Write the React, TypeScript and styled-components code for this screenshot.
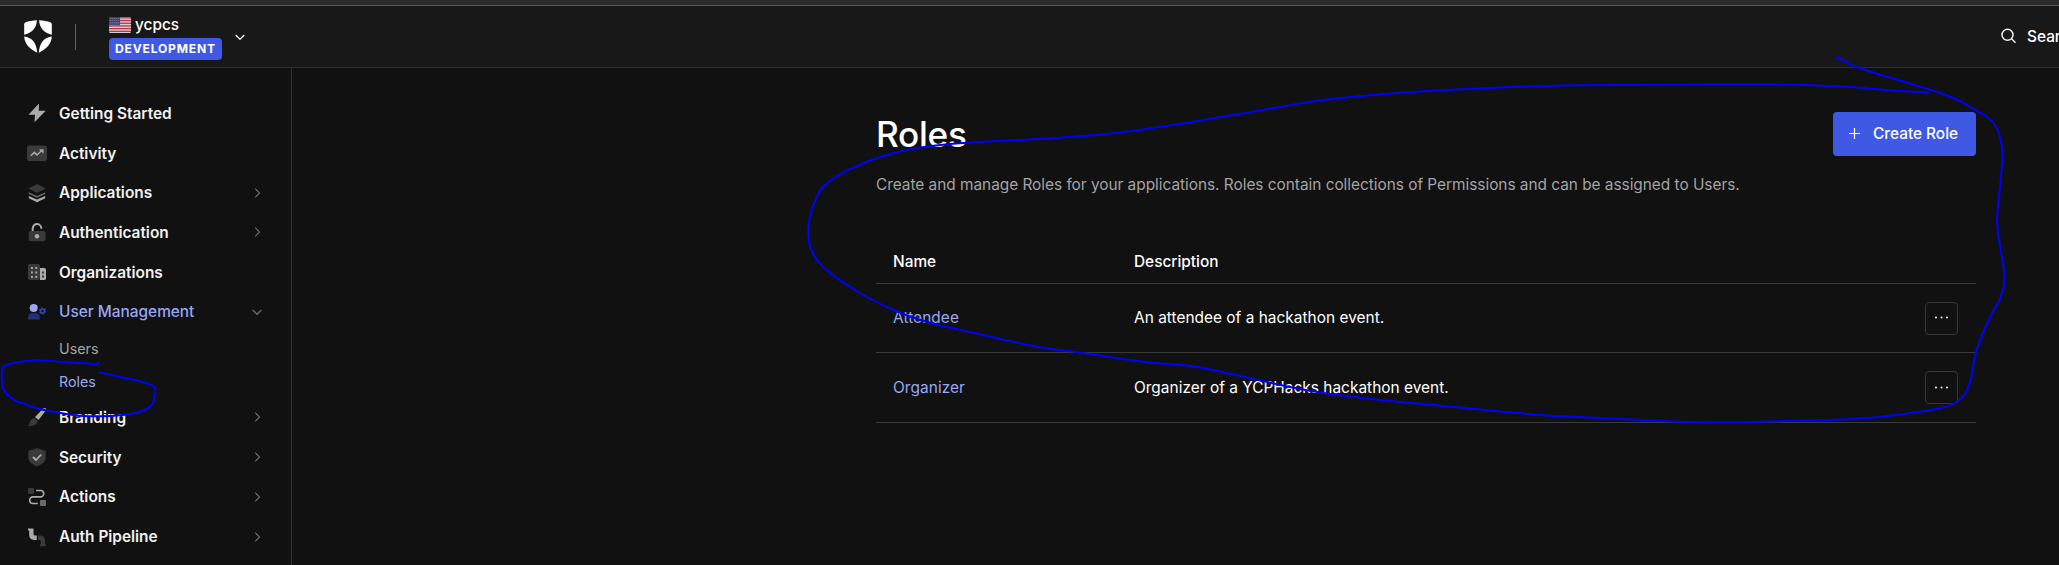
import React from 'react';
import styled, { createGlobalStyle } from 'styled-components';

const Global = createGlobalStyle`
  *, *::before, *::after { box-sizing: border-box; }
  html, body { margin: 0; padding: 0; background: #111111; overflow: hidden; }
  body { font-family: Inter, "Liberation Sans", sans-serif; color: #fff; }
`;

const Page = styled.div`
  position: relative;
  display: flex;
  flex-direction: column;
  width: 100%;
  height: 565px;
  overflow: hidden;
  background: #111111;
`;

const WindowEdge = styled.div`
  flex: none;
  height: 6px;
  background: #2c2c2c;
  border-bottom: 1px solid #575757;
`;

const Header = styled.header`
  flex: none;
  display: flex;
  align-items: center;
  height: 62px;
  padding-left: 24px;
  background: #181818;
  border-bottom: 1px solid #303030;
`;

const LogoLink = styled.a`
  display: flex;
  width: 28px;
`;

const Divider = styled.span`
  width: 1px;
  height: 26px;
  margin: 0 33px 0 23px;
  background: #666;
`;

const Tenant = styled.div`
  display: flex;
  flex-direction: column;
  align-items: flex-start;
  gap: 4px;
  padding-top: 2px;
`;

const TenantName = styled.div`
  display: flex;
  align-items: center;
  gap: 4px;
  height: 18px;
  font-size: 15.4px;
  font-weight: 500;
`;

const EnvBadge = styled.span`
  display: flex;
  align-items: center;
  height: 22px;
  padding: 0 6px;
  border-radius: 4px;
  background: #3f59e4;
  font-size: 12.1px;
  font-weight: 700;
  letter-spacing: 0.8px;
`;

const TenantToggle = styled.span`
  display: flex;
  margin-left: 12px;
`;

const Search = styled.div`
  display: flex;
  align-items: center;
  gap: 11px;
  width: 58px;
  margin-left: auto;
  padding-bottom: 1px;
  overflow: hidden;
  white-space: nowrap;
  font-size: 15.4px;
  font-weight: 500;
  svg { flex: none; }
`;

const Body = styled.div`
  flex: 1;
  display: flex;
  min-height: 0;
`;

const Sidebar = styled.nav`
  flex: none;
  width: 292px;
  padding: 25.5px 28px 0 27px;
  border-right: 1px solid #303030;
`;

const NavItem = styled.a<{ $active?: boolean }>`
  display: flex;
  align-items: center;
  height: 39.7px;
  color: ${(p) => (p.$active ? '#99a7f1' : '#f2f2f2')};
  font-size: 15.4px;
  font-weight: ${(p) => (p.$active ? 500 : 600)};
`;

const NavIcon = styled.span`
  display: flex;
  width: 20px;
  margin-right: 12px;
`;

const NavLabel = styled.span`
  flex: 1;
`;

const SubList = styled.div`
  padding: 0 0 0 32px;
  height: 66px;
`;

const SubItem = styled.a<{ $active?: boolean }>`
  display: flex;
  align-items: center;
  height: 33px;
  color: ${(p) => (p.$active ? '#99a7f1' : '#a3a3a3')};
  font-size: 14.3px;
`;

const Main = styled.main`
  width: 1100px;
  margin-left: 584px;
  padding-top: 44px;
`;

const TitleRow = styled.div`
  display: flex;
  justify-content: space-between;
  height: 44px;
`;

const Title = styled.h1`
  margin: 0;
  font-size: 35.2px;
  line-height: 45px;
  font-weight: 500;
  letter-spacing: -0.3px;
`;

const CreateButton = styled.button`
  display: flex;
  align-items: center;
  width: 143px;
  height: 44px;
  padding: 0 0 2px 16px;
  gap: 13px;
  border: 0;
  border-radius: 4px;
  background: #3f59e4;
  color: #fff;
  font-family: inherit;
  font-size: 15.4px;
  font-weight: 500;
  white-space: nowrap;
`;

const Intro = styled.p`
  margin: 16px 0 0;
  height: 26px;
  line-height: 26px;
  font-size: 15.4px;
  letter-spacing: -0.02px;
  color: #a3a3a3;
  white-space: nowrap;
`;

const Table = styled.div`
  margin-top: 41px;
`;

const Row = styled.div<{ $head?: boolean; $height: number }>`
  display: grid;
  grid-template-columns: 241px 1fr 33px;
  align-items: center;
  height: ${(p) => p.$height}px;
  padding: 0 18px 0 17px;
  border-bottom: 1px solid #3a3a3a;
  font-size: 15.4px;
  font-weight: ${(p) => (p.$head ? 500 : 400)};
`;

const Cell = styled.span`
  padding-bottom: 1px;
  letter-spacing: 0.03px;
`;

const RoleLink = styled.a`
  padding-bottom: 1px;
  color: #99a7f1;
  letter-spacing: 0.08px;
`;

const MoreButton = styled.button`
  display: flex;
  align-items: center;
  justify-content: center;
  width: 33px;
  height: 33px;
  padding: 0 0 1px;
  border: 1px solid #363636;
  border-radius: 4px;
  background: transparent;
`;

const InkLayer = styled.svg`
  position: absolute;
  left: 0;
  top: 0;
  pointer-events: none;
`;

const Shield = () => (
  <svg width="28" height="33" viewBox="0 0 28 34" preserveAspectRatio="none" fill="#fff">
    <path d="M13 .3C8.500 .4 4.500 1.300 1.600 2.400Q.3 3 .2 4.500V15.100C7 14 12.300 9 13 .3Z" />
    <path d="M15 .3C19.500 .4 23.500 1.300 26.400 2.400Q27.700 3 27.800 4.500V15.100C21 14 15.700 9 15 .3Z" />
    <path d="M.2 17C7.500 17.800 12.600 23 13.200 33.800C6 30 .5 25 .2 17Z" />
    <path d="M27.800 17C20.500 17.800 15.400 23 14.800 33.800C22 30 27.500 25 27.800 17Z" />
  </svg>
);

const Flag = () => (
  <svg width="22" height="16" viewBox="0 0 22 16">
    <rect width="22" height="16" rx="1.500" fill="#d9cfd2" />
    {[0, 1, 2, 3, 4, 5].map((i) => (
      <rect key={i} y={0.2 + i * 2.7} width="22" height="1.300" fill="#b5364b" />
    ))}
    <rect width="11" height="8.200" fill="#3c3f72" />
    {[1.5, 3.5, 5.5, 7].map((y, r) =>
      [1.5, 3.5, 5.5, 7.5, 9.5].map((x) => (
        <rect key={`${x}-${y}`} x={x - (r % 2 ? 0.8 : 0)} y={y - 0.4} width="0.800" height="0.800" fill="#a9aac9" />
      )),
    )}
  </svg>
);

const Chevron = ({ dir, color }: { dir: 'right' | 'down'; color: string }) => (
  <svg width="12" height="12" viewBox="0 0 12 12" fill="none" stroke={color} strokeWidth={dir === 'down' ? 1.4 : 1.2}>
    {dir === 'right' ? <path d="M4.200 1.700L8.500 6L4.200 10.300" /> : <path d="M1.700 4L6 8.200L10.300 4" />}
  </svg>
);

const L = '#ababab';
const M = '#6a6a6a';
const D = '#3a3a3a';

const icons: Record<string, React.ReactNode> = {
  bolt: <path d="M11.500 1L1.500 11.800H8L7.500 19.300L18.700 7.800H11.800L12 1.200Z" fill={L} />,
  activity: (
    <>
      <rect x="0" y="2.500" width="20" height="15.500" rx="2" fill={D} />
      <path d="M3.800 12.800L7.400 9.400L10 12L15 7.300" fill="none" stroke={L} strokeWidth="1.500" />
      <path d="M12 6.200H16.500V10.700Z" fill={L} />
    </>
  ),
  layers: (
    <>
      <path d="M1.800 14L10 17L18.200 14V15.200L10 19.300L1.800 15.200Z M1.800 13L10 16.500L18.200 13V15L10 19L1.800 15Z" fill={L} />
      <path d="M1.500 9.200L10 13L18.500 9.200L18 11L10 14.800L2 11Z" fill={M} />
      <path d="M10 1L18.500 5.500L10 10L1.500 5.500Z" fill={D} />
    </>
  ),
  lock: (
    <>
      <rect x="1.700" y="9" width="16.800" height="10.200" rx="2" fill={D} />
      <path d="M5.700 9V6.300A4.300 4.500 0 0 1 14.300 6.800" fill="none" stroke={L} strokeWidth="2" />
      <circle cx="10" cy="14.200" r="2.200" fill={L} />
    </>
  ),
  building: (
    <>
      <rect x="1" y="2" width="12" height="16" rx="2" fill={D} />
      {[5, 9.5, 14].map((y) => [4, 8.3].map((x) => <rect key={`${x}-${y}`} x={x} y={y} width="1.900" height="1.900" fill={L} />))}
      <path d="M13 6H17.200A1.800 1.800 0 0 1 19 7.800V16.200A1.800 1.800 0 0 1 17.200 18H13Z" fill={L} />
      <rect x="15" y="9.500" width="2" height="2" fill={D} />
      <rect x="15" y="13.500" width="2" height="2" fill={D} />
    </>
  ),
  users: (
    <>
      <circle cx="6.700" cy="6" r="4" fill="#99a7f1" />
      <path d="M1 17.500V15.500A4.500 4.500 0 0 1 5.500 11.200H8.300A4.500 4.500 0 0 1 12.800 15.500V17.500Z" fill="#23307c" />
      <circle cx="15.500" cy="9" r="2" fill="none" stroke="#3048b8" strokeWidth="1.500" />
      <circle cx="15.500" cy="9" r="3" fill="none" stroke="#3048b8" strokeWidth="1.200" strokeDasharray="1.700 1.442" />
    </>
  ),
  brush: (
    <>
      <path d="M18.800 1V3.500L11.500 13L8 10L16.500 1.300Z" fill={L} />
      <path d="M7.300 11L10.600 14C10.500 17.500 7 19.300 1 18.800C3.500 17 2 12 7.300 11Z" fill={D} />
    </>
  ),
  shield: (
    <>
      <path d="M10 1L18.700 4V10.500C18.700 14.500 15 17.500 10 19.300C5 17.500 1.300 14.500 1.300 10.500V4Z" fill={D} />
      <path d="M6 10L9 13L14.200 7.500" fill="none" stroke={L} strokeWidth="1.800" />
    </>
  ),
  actions: (
    <>
      <rect x="1" y="1" width="6" height="6" rx="1" fill={D} />
      <rect x="13" y="13" width="6" height="6" rx="1" fill={M} />
      <path d="M9 3.500H13.500A3.200 3.200 0 0 1 13.500 9.900H6A3.200 3.200 0 0 0 6 16.500H10.800" fill="none" stroke={L} strokeWidth="1.600" />
    </>
  ),
  pipeline: (
    <>
      <path d="M1 1.500H6.500V7Q6.500 8.500 8 8.500H9.800V13H7Q2.300 12.500 2.200 8V3.500H1Z" fill={L} />
      <path d="M11 8.500H13.500Q18 9 18 13.500V17.500H19V19.300H13V17.500H13.800V14.500Q13.800 13 12.500 13H11Z" fill={D} />
    </>
  ),
};

type Entry = { icon: string; label: string; chevron?: 'right' | 'down'; active?: boolean; children?: string[] };

const entries: Entry[] = [
  { icon: 'bolt', label: 'Getting Started' },
  { icon: 'activity', label: 'Activity' },
  { icon: 'layers', label: 'Applications', chevron: 'right' },
  { icon: 'lock', label: 'Authentication', chevron: 'right' },
  { icon: 'building', label: 'Organizations' },
  { icon: 'users', label: 'User Management', chevron: 'down', active: true, children: ['Users', 'Roles'] },
  { icon: 'brush', label: 'Branding', chevron: 'right' },
  { icon: 'shield', label: 'Security', chevron: 'right' },
  { icon: 'actions', label: 'Actions', chevron: 'right' },
  { icon: 'pipeline', label: 'Auth Pipeline', chevron: 'right' },
];

const roles = [
  { name: 'Attendee', description: 'An attendee of a hackathon event.', height: 69 },
  { name: 'Organizer', description: 'Organizer of a YCPHacks hackathon event.', height: 70 },
];

type Point = [number, number];

// Freehand pen strokes, as the points the pen passed through.
const navStroke: Point[] = [
  [99, 362.5], [96, 364], [89, 363.5], [60, 361.7], [36, 360.3], [20, 362], [5, 365.500], [2.3, 369], [2, 379], [3.500, 389],
  [9, 396], [18, 402], [24, 403.5], [29, 406], [37, 408.3], [47, 410.7], [62, 413.3], [80, 415.7], [100, 416.3], [120, 415.3],
  [135, 413], [145, 410], [150, 406.5], [153.5, 402], [155, 394], [154.500, 387], [150, 384.5], [138, 380.8], [118, 376.500], [100, 372.5],
];

const mainStroke: Point[] = [
  [1836, 57.3], [1845, 61], [1853, 66], [1913, 84.5], [1943, 94], [1960, 101], [1970, 107], [1987, 117], [1995, 125],
  [2000, 137], [2002.5, 153], [2001, 177], [1998, 207], [1997, 220], [1999, 240], [2002, 257], [2004, 270], [2004, 285],
  [1999, 301], [1993, 311], [1983, 333], [1976, 352], [1973, 367], [1971, 379], [1965, 394], [1955, 403], [1940, 408.3],
  [1907, 413.5], [1867, 418], [1827, 420], [1750, 422], [1720, 422.2], [1667, 421.3], [1590, 417.5], [1540, 415],
  [1440, 405.7], [1380, 400], [1320, 392.5], [1290, 387], [1247, 377.5], [1210, 369.5], [1187, 365.5], [1143, 361.7],
  [1083, 353], [1043, 347.7], [1007, 340.5], [977, 333.5], [933, 323.5], [897, 311.5], [860, 293], [823, 267], [811, 249],
  [808.3, 233], [809.3, 220], [813, 206], [818, 195], [822, 188], [837, 176], [857, 166], [877, 158], [900, 151.5],
  [927, 146.5], [967, 142.7], [1033, 139.3], [1083, 136], [1127, 131.5], [1183, 123.5], [1233, 115], [1280, 107],
  [1317, 100.8], [1380, 94.3], [1423, 91.3], [1467, 89], [1513, 87], [1563, 85.5], [1613, 85], [1777, 84.5], [1817, 85.5],
  [1860, 87.7], [1900, 91], [1928, 92.5],
];

const toPath = (pts: Point[]) => {
  let d = `M${pts[0][0]} ${pts[0][1]}`;
  for (let i = 0; i < pts.length - 1; i++) {
    const a = pts[i];
    const b = pts[i + 1];
    const before = pts[i - 1] ?? a;
    const after = pts[i + 2] ?? b;
    // Tangents are scaled to the segment so that unevenly spaced points do not overshoot.
    const len = Math.hypot(b[0] - a[0], b[1] - a[1]) / 3;
    const ta = Math.hypot(b[0] - before[0], b[1] - before[1]) || 1;
    const tb = Math.hypot(after[0] - a[0], after[1] - a[1]) || 1;
    const c1 = [a[0] + ((b[0] - before[0]) / ta) * len, a[1] + ((b[1] - before[1]) / ta) * len];
    const c2 = [b[0] - ((after[0] - a[0]) / tb) * len, b[1] - ((after[1] - a[1]) / tb) * len];
    d += `C${c1[0].toFixed(2)} ${c1[1].toFixed(2)} ${c2[0].toFixed(2)} ${c2[1].toFixed(2)} ${b[0]} ${b[1]}`;
  }
  return d;
};

const Ink = () => (
  <InkLayer width="2059" height="565" viewBox="0 0 2059 565" fill="none" stroke="#0000ff" strokeWidth="2" strokeLinecap="round" strokeLinejoin="round">
    <path d={toPath(navStroke)} />
    <path d={toPath(mainStroke)} />
  </InkLayer>
);

export default function App() {
  return (
    <Page>
      <Global />
      <WindowEdge />
      <Header>
        <LogoLink><Shield /></LogoLink>
        <Divider />
        <Tenant>
          <TenantName><Flag />ycpcs</TenantName>
          <EnvBadge>DEVELOPMENT</EnvBadge>
        </Tenant>
        <TenantToggle><Chevron dir="down" color="#eee" /></TenantToggle>
        <Search>
          <svg width="15" height="16" viewBox="0 0 15 16" fill="none" stroke="#eee" strokeWidth="1.500">
            <circle cx="6.500" cy="6.800" r="5.500" />
            <path d="M10.500 10.800L14.500 14.800" />
          </svg>
          Search
        </Search>
      </Header>
      <Body>
        <Sidebar>
          {entries.map((e) => (
            <React.Fragment key={e.label}>
              <NavItem $active={e.active}>
                <NavIcon><svg width="20" height="20" viewBox="0 0 20 20">{icons[e.icon]}</svg></NavIcon>
                <NavLabel>{e.label}</NavLabel>
                {e.chevron && <Chevron dir={e.chevron} color="#6c6c6c" />}
              </NavItem>
              {e.children && (
                <SubList>
                  {e.children.map((c) => <SubItem key={c} $active={c === 'Roles'}>{c}</SubItem>)}
                </SubList>
              )}
            </React.Fragment>
          ))}
        </Sidebar>
        <Main>
          <TitleRow>
            <Title>Roles</Title>
            <CreateButton>
              <svg width="11" height="11" viewBox="0 0 11 11" stroke="#fff" strokeWidth="1.200"><path d="M5.500 0V11M0 5.500H11" /></svg>
              Create Role
            </CreateButton>
          </TitleRow>
          <Intro>Create and manage Roles for your applications. Roles contain collections of Permissions and can be assigned to Users.</Intro>
          <Table>
            <Row $head $height={45}><span>Name</span><span>Description</span></Row>
            {roles.map((r) => (
              <Row key={r.name} $height={r.height}>
                <RoleLink>{r.name}</RoleLink>
                <Cell>{r.description}</Cell>
                <MoreButton>
                  <svg width="15" height="3" viewBox="0 0 15 3" fill="#fff">
                    <circle cx="2" cy="1.500" r="1" /><circle cx="7.500" cy="1.500" r="1" /><circle cx="13" cy="1.500" r="1" />
                  </svg>
                </MoreButton>
              </Row>
            ))}
          </Table>
        </Main>
      </Body>
      <Ink />
    </Page>
  );
}
